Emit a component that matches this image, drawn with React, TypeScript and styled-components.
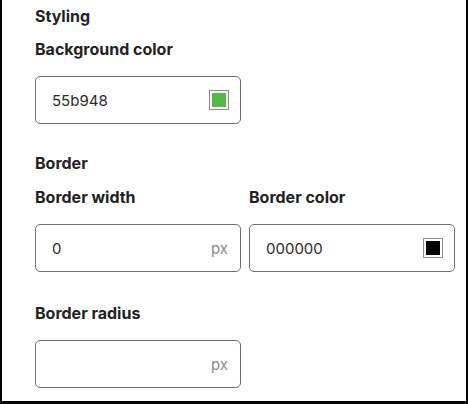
import React from "react";
import styled, { createGlobalStyle } from "styled-components";

const Global = createGlobalStyle`
  html, body { margin: 0; padding: 0; background: #ffffff; }
  * { box-sizing: border-box; }
  body { font-family: Inter, "Noto Sans", sans-serif; color: #222222; }
`;

const Panel = styled.div`
  width: 468px;
  height: 404px;
  background: #ffffff;
  border-left: 2px solid #000000;
  border-right: 2px solid #000000;
  border-bottom: 3px solid #000000;
  padding: 6px 12px 0 33px;
  display: flex;
  flex-direction: column;
`;

const Heading = styled.div<{ $gap?: number }>`
  font-size: 16px;
  line-height: 20px;
  font-weight: 700;
  color: #222222;
  margin-top: ${(p) => p.$gap ?? 0}px;
`;

const Row = styled.div`
  display: grid;
  grid-template-columns: 206px 206px;
  column-gap: 8px;
`;

const Field = styled.div`
  display: flex;
  flex-direction: column;
`;

const Label = styled.div`
  font-size: 16px;
  line-height: 20px;
  font-weight: 700;
  color: #222222;
  margin-bottom: 17px;
`;

const InputBox = styled.div`
  width: 206px;
  height: 48px;
  border: 1px solid #6f6f6f;
  border-radius: 5px;
  display: flex;
  align-items: center;
  justify-content: space-between;
  padding: 0 11px 0 16px;
`;

const Value = styled.span`
  font-size: 15px;
  color: #2a2a2a;
`;

const Unit = styled.span`
  font-size: 15px;
  color: #8a8a8a;
  margin-right: 1px;
`;

const Swatch = styled.span<{ $color: string }>`
  width: 20px;
  height: 20px;
  border: 1px solid #8c8c8c;
  padding: 2px;
  background: #ffffff;
  display: inline-flex;
  &::after {
    content: "";
    flex: 1;
    background: ${(p) => p.$color};
  }
`;

const Input: React.FC<{ value?: string; unit?: string; color?: string }> = ({ value, unit, color }) => (
  <InputBox>
    <Value>{value ?? ""}</Value>
    {unit && <Unit>{unit}</Unit>}
    {color && <Swatch $color={color} />}
  </InputBox>
);

export default function App() {
  return (
    <>
      <Global />
      <Panel>
        <Heading>Styling</Heading>
        <Field style={{ marginTop: 13 }}>
          <Label>Background color</Label>
          <Input value="55b948" color="#55b948" />
        </Field>
        <Heading $gap={29}>Border</Heading>
        <Row style={{ marginTop: 14 }}>
          <Field>
            <Label>Border width</Label>
            <Input value="0" unit="px" />
          </Field>
          <Field>
            <Label>Border color</Label>
            <Input value="000000" color="#000000" />
          </Field>
        </Row>
        <Field style={{ marginTop: 31 }}>
          <Label>Border radius</Label>
          <Input unit="px" />
        </Field>
      </Panel>
    </>
  );
}
